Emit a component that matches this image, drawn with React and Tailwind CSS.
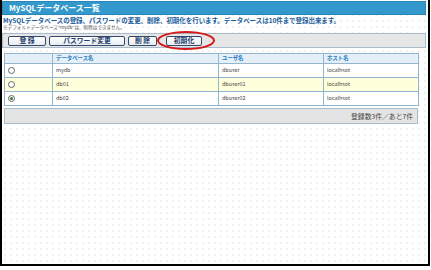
import React from "react";

const F = { fontFamily: '"Noto Sans CJK JP", "Noto Sans", sans-serif' };

function Radio({ checked }) {
  return (
    <span className="inline-flex items-center justify-center w-[7px] h-[7px] rounded-full border border-[#666] bg-white">
      {checked && <span className="w-[3px] h-[3px] rounded-full bg-[#2f7a2f]" />}
    </span>
  );
}

function Btn({ children, w }) {
  return (
    <div
      className={`h-[10px] ${w} flex items-center justify-center border border-[#34486a] rounded-[2px] bg-gradient-to-b from-white to-[#e8ecf2] text-[6.8px] font-bold text-[#23406b] leading-none`}
    >
      {children}
    </div>
  );
}

const rows = [
  { db: "mydb", user: "dbuser", host: "localhsot", bg: "bg-white", checked: false },
  { db: "db01", user: "dbuser01", host: "localhsot", bg: "bg-[#ffffdc]", checked: false },
  { db: "db02", user: "dbuser02", host: "localhsot", bg: "bg-white", checked: true },
];

export default function App() {
  return (
    <div className="w-[431px] h-[270px] bg-white overflow-hidden" style={F}>
      <div className="w-[430px] h-[266px] border-l-2 border-r-2 border-b-2 border-black bg-[radial-gradient(#f1f1f1_0.8px,transparent_0.8px)] bg-[size:6px_6px] pt-px">
        <div className="h-[14px] mr-[2px] bg-[#3399cc] border border-[#2a86b8] flex items-center pl-[6px] text-white text-[8px] font-bold leading-none">
          MySQLデータベース一覧
        </div>
        <div className="pl-[1px] mt-[2px] text-[6.5px] font-bold text-[#1b5e9a] leading-[7px] whitespace-nowrap tracking-[-0.05px]">
          MySQLデータベースの登録、パスワードの変更、削除、初期化を行います。データベースは10件まで登録出来ます。
        </div>
        <div className="pl-[1px] text-[4.6px] text-[#555] leading-[6px] whitespace-nowrap">
          ※デフォルトデータベース"mydb"は、削除はできません。
        </div>
        <div className="mt-[3px] mr-[2px] h-[15px] bg-[#e6e6e6] border border-[#a9bccb] flex items-center pl-[5px] gap-[3px] relative">
          <Btn w="w-[38px]">登 録</Btn>
          <Btn w="w-[76px]">パスワード変更</Btn>
          <Btn w="w-[29px]">削 除</Btn>
          <div className="ml-[6px]">
            <Btn w="w-[36px]">初期化</Btn>
          </div>
          <div className="absolute left-[154px] top-[-3px] w-[58px] h-[19px] rounded-[50%] border-2 border-[#d81818]" />
        </div>
        <div className="mt-[5px] ml-[2px] w-[414px]">
          <table className="w-[414px] border-collapse table-fixed text-[5.4px] leading-none">
            <colgroup>
              <col className="w-[48px]" />
              <col className="w-[166px]" />
              <col className="w-[105px]" />
              <col className="w-[95px]" />
            </colgroup>
            <thead>
              <tr className="h-[10px] bg-[#e4eff8]">
                <th className="border border-[#93b6cf]" />
                <th className="border border-[#93b6cf] text-left pl-[3px] font-bold text-[#2a7cc0]">データベース名</th>
                <th className="border border-[#93b6cf] text-left pl-[3px] font-bold text-[#2a7cc0]">ユーザ名</th>
                <th className="border border-[#93b6cf] text-left pl-[3px] font-bold text-[#2a7cc0]">ホスト名</th>
              </tr>
            </thead>
            <tbody>
              {rows.map((r) => (
                <tr key={r.db} className={`h-[14px] ${r.bg} text-[#444]`}>
                  <td className="border border-[#93b6cf] pl-[3px] align-middle">
                    <div className="flex items-center"><Radio checked={r.checked} /></div>
                  </td>
                  <td className="border border-[#93b6cf] pl-[3px]">{r.db}</td>
                  <td className="border border-[#93b6cf] pl-[3px]">{r.user}</td>
                  <td className="border border-[#93b6cf] pl-[3px]">{r.host}</td>
                </tr>
              ))}
            </tbody>
          </table>
          <div className="mt-[2px] h-[16px] bg-[#e4e4e4] border border-[#a9bccb] flex items-center justify-end pr-[4px] text-[6.8px] text-[#444] leading-none">
            登録数3件／あと7件
          </div>
        </div>
      </div>
    </div>
  );
}
